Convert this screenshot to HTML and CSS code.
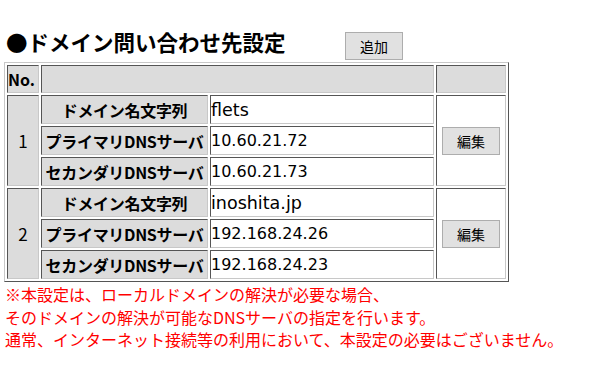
FILE: index.html
```html
<!DOCTYPE html>
<html lang="ja">
<head>
      <meta charset="UTF-8">
      <meta name="viewport" content="width=device-width, initial-scale=1.0">
      <title>ドメイン問い合わせ先設定</title>
      <link rel="stylesheet" href="styles.css">
</head>
<body>
      <div class="title-bar">
            <h1 class="title">●ドメイン問い合わせ先設定</h1>
            <button class="btn btn-add" type="button">追加</button>
      </div>
      <table class="dns-table">
            <colgroup>
                  <col class="col-no">
                  <col class="col-label">
                  <col class="col-value">
                  <col class="col-edit">
            </colgroup>
            <tr class="head-row">
                  <th class="no">No.</th>
                  <th colspan="2"></th>
                  <th></th>
            </tr>
            <tr>
                  <td class="num" rowspan="3">1</td>
                  <th class="label">ドメイン名文字列</th>
                  <td class="value value-name">flets</td>
                  <td class="edit" rowspan="3"><button class="btn" type="button">編集</button></td>
            </tr>
            <tr>
                  <th class="label">プライマリDNSサーバ</th>
                  <td class="value">10.60.21.72</td>
            </tr>
            <tr>
                  <th class="label">セカンダリDNSサーバ</th>
                  <td class="value">10.60.21.73</td>
            </tr>
            <tr>
                  <td class="num" rowspan="3">2</td>
                  <th class="label">ドメイン名文字列</th>
                  <td class="value value-name">inoshita.jp</td>
                  <td class="edit" rowspan="3"><button class="btn" type="button">編集</button></td>
            </tr>
            <tr>
                  <th class="label">プライマリDNSサーバ</th>
                  <td class="value">192.168.24.26</td>
            </tr>
            <tr>
                  <th class="label">セカンダリDNSサーバ</th>
                  <td class="value">192.168.24.23</td>
            </tr>
      </table>
      <p class="note">
            ※本設定は、ローカルドメインの解決が必要な場合、<br>
            そのドメインの解決が可能なDNSサーバの指定を行います。<br>
            通常、インターネット接続等の利用において、本設定の必要はございません。
      </p>
</body>
</html>
```

FILE: styles.css
```css
html{
      box-sizing: border-box;
}
*, *:after, *:before{
      box-sizing: inherit;
}
body{
      margin: 0;
      padding: 27px 0 0 4px;
      font-family: "Noto Sans CJK JP", "Noto Sans", sans-serif;
      color: #000;
      background: #fff;
}
.title-bar{
      display: flex;
      align-items: center;
      height: 35px;
}
.title{
      margin: 0 0 5px 2px;
      width: 339px;
      font-size: 21.5px;
      font-weight: bold;
      line-height: 30px;
}
.btn{
      font-family: "Noto Sans CJK JP", sans-serif;
      font-size: 14px;
      background: #e1e1e1;
      border: 1px solid #adadad;
      color: #000;
      padding: 0;
      width: 58px;
      height: 28px;
}
.btn-add{
      margin-top: 2px;
}
.dns-table{
      table-layout: fixed;
      width: 505px;
      border-collapse: separate;
      border-spacing: 2px;
      border: 1px solid;
      border-color: #c8c8c8 #555 #555 #c8c8c8;
}
.col-no{ width: 32px; }
.col-label{ width: 167px; }
.col-value{ width: 224px; }
.col-edit{ width: 70px; }
.dns-table th, .dns-table td{
      border: 1px solid;
      border-color: #555 #c8c8c8 #c8c8c8 #555;
      padding: 0;
      height: 29px;
      white-space: nowrap;
}
.head-row th{
      height: 28px;
      background: #dcdcdc;
}
.no{
      font-size: 16px;
      text-align: left;
      padding-left: 1px;
}
.num{
      background: #dcdcdc;
      text-align: center;
      font-size: 17px;
}
.label{
      background: #dcdcdc;
      font-size: 16px;
      text-align: center;
      letter-spacing: -0.3px;
}
.value{
      padding-left: 2px;
      font-family: "DejaVu Sans", sans-serif;
      font-size: 16px;
}
.value-name{
      font-size: 17.5px;
}
.edit{
      text-align: center;
}
.note{
      margin: 1px 0 0 1px;
      color: #f00;
      font-size: 16px;
      line-height: 22.5px;
}
```
